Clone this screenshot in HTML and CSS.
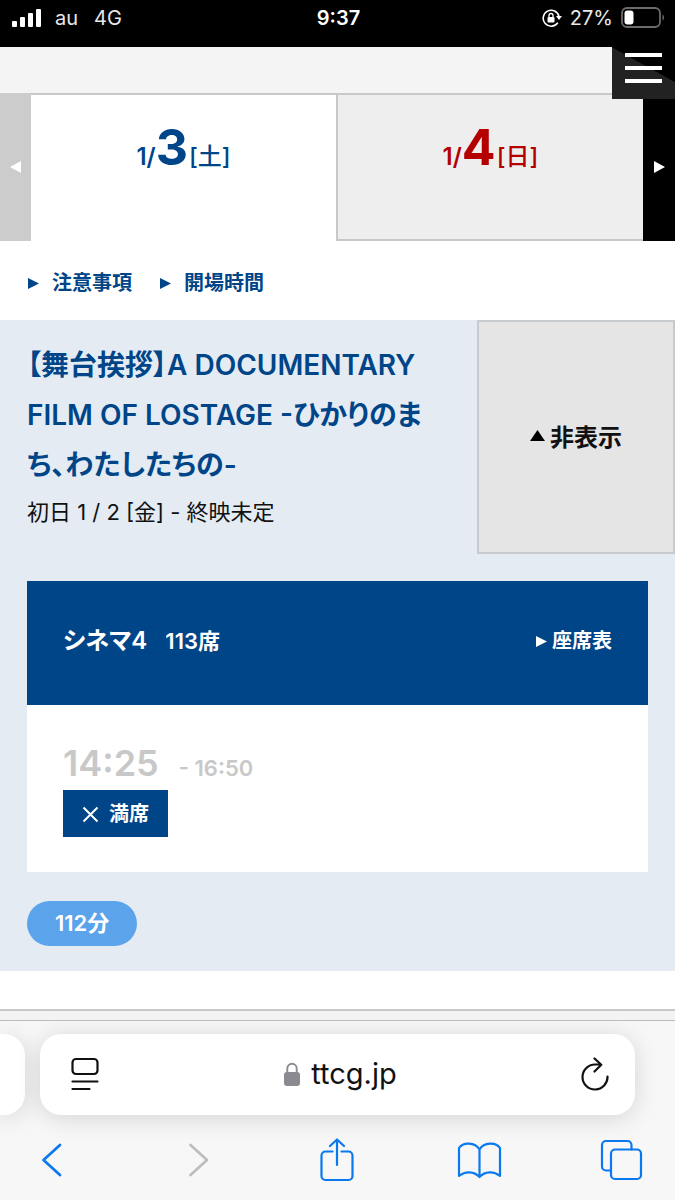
FILE: index.html
```html
<!DOCTYPE html>
<html lang="ja">
<head>
<meta charset="utf-8">
<meta name="viewport" content="width=device-width, initial-scale=1">
<title>ttcg.jp</title>
<link rel="stylesheet" href="styles.css">
</head>
<body>
<div class="phone">
  <div class="status">
    <div class="status-left">
      <svg class="signal" width="30" height="20" viewBox="0 0 30 20" aria-hidden="true"><g fill="#fff"><rect x="0" y="13" width="5" height="6" rx="1"/><rect x="8" y="9" width="5" height="10" rx="1"/><rect x="16" y="5" width="5" height="14" rx="1"/><rect x="24" y="1" width="5" height="18" rx="1"/></g></svg>
      <span>au</span><span>4G</span>
    </div>
    <div class="status-time">9:37</div>
    <div class="status-right">
      <svg width="20" height="20" viewBox="0 0 20 20" fill="none" aria-hidden="true"><path d="M15.8 14.8A8 8 0 1 1 17 8.500" stroke="#fff" stroke-width="1.600"/><path d="M14 8h6l-3 4z" fill="#fff"/><rect x="5.500" y="9" width="7" height="5.500" rx="1" fill="#fff"/><path d="M7 9V7.500a2 2 0 0 1 4 0V9" stroke="#fff" stroke-width="1.300"/></svg>
      <span>27%</span>
      <svg width="44" height="22" viewBox="0 0 44 22" fill="none" aria-hidden="true"><rect x="1" y="1" width="38" height="19" rx="5" stroke="#6b6b6b" stroke-width="1.800"/><rect x="3.500" y="3.500" width="9" height="14" rx="3" fill="#fff"/><path d="M41.500 7.500c2 .8 2 5.200 0 6z" fill="#6b6b6b"/></svg>
    </div>
  </div>

  <main class="page">
    <header class="site-header">
      <button class="menu" aria-label="メニュー"><span></span><span></span><span></span></button>
    </header>

    <nav class="dates" aria-label="上映日">
      <button class="step prev" aria-label="前の日"><svg width="11" height="12" viewBox="0 0 11 12"><path d="M11 0v12L0 6z"/></svg></button>
      <a class="date current" href="#d3"><span>1/</span><strong>3</strong><span class="dow">[土]</span></a>
      <a class="date sunday" href="#d4"><span>1/</span><strong>4</strong><span class="dow">[日]</span></a>
      <button class="step next" aria-label="次の日"><svg width="11" height="12" viewBox="0 0 11 12"><path d="M0 0v12L11 6z"/></svg></button>
    </nav>

    <div class="notes">
      <a href="#notice"><svg width="11" height="11" viewBox="0 0 11 11"><path d="M0 0v11l11-5.500z"/></svg>注意事項</a>
      <a href="#open"><svg width="11" height="11" viewBox="0 0 11 11"><path d="M0 0v11l11-5.500z"/></svg>開場時間</a>
    </div>

    <article class="film">
      <div class="film-head">
        <div class="film-info">
          <h2>【舞台挨拶】A DOCUMENTARY FILM OF LOSTAGE -ひかりのまち、わたしたちの-</h2>
          <p>初日 1 / 2 [金] - 終映未定</p>
        </div>
        <button class="toggle"><svg width="15" height="11" viewBox="0 0 15 11"><path d="M7.500 0L15 11H0z"/></svg>非表示</button>
      </div>
      <section class="screen">
        <div class="screen-head">
          <h3>シネマ4</h3><span class="seats">113席</span>
          <a href="#seatmap"><svg width="11" height="11" viewBox="0 0 11 11"><path d="M0 0v11l11-5.500z"/></svg>座席表</a>
        </div>
        <div class="screen-body">
          <div class="time"><span class="start">14:25</span><span class="end">- 16:50</span></div>
          <div class="full"><svg width="17" height="17" viewBox="0 0 17 17"><path d="M1.500 1.500l14 14M15.500 1.500l-14 14"/></svg>満席</div>
        </div>
      </section>
      <span class="runtime">112分</span>
    </article>
    <div class="next-film"></div>
  </main>

  <footer class="browser">
    <div class="address-row">
      <div class="other-tab"></div>
      <div class="address">
        <button aria-label="ページメニュー"><svg width="30" height="34" viewBox="0 0 30 34" fill="none" stroke="#111" stroke-width="2.200" stroke-linecap="round"><rect x="2.500" y="2" width="25" height="15" rx="3.500"/><path d="M2.500 24.500h25M2.500 32h17"/></svg></button>
        <a class="host" href="#top"><svg width="18" height="25" viewBox="0 0 18 25"><rect x="1" y="10" width="16" height="14" rx="3" fill="#8a8a90"/><path d="M4.300 11V6.500a4.700 4.700 0 0 1 9.400 0V11" fill="none" stroke="#8a8a90" stroke-width="1.900"/></svg>ttcg.jp</a>
        <button aria-label="再読み込み"><svg width="30" height="34" viewBox="0 0 30 34" fill="none" stroke="#111" stroke-width="2.200" stroke-linecap="round" stroke-linejoin="round"><path d="M27.500 19.500A12.500 12.500 0 1 1 15 7.500h6M14.500 1.500l6.800 6.200-6.800 6.800"/></svg></button>
      </div>
    </div>
    <div class="tools">
      <button aria-label="戻る"><svg width="48" height="44" viewBox="0 0 48 44"><path d="M32 7L15.500 22 32 37" stroke-width="2.700"/></svg></button>
      <button class="off" aria-label="進む"><svg width="48" height="44" viewBox="0 0 48 44"><path d="M20.500 7L37 22 20.500 37" stroke-width="2.700"/></svg></button>
      <button aria-label="共有"><svg width="48" height="44" viewBox="0 0 48 44"><path d="M19.500 13.500H12.500a4 4 0 0 0-4 4V38a4 4 0 0 0 4 4h23a4 4 0 0 0 4-4V17.500a4 4 0 0 0-4-4h-7M24 27V2M17 8l7-6.500L31 8"/></svg></button>
      <button aria-label="ブックマーク"><svg width="48" height="44" viewBox="0 0 48 44"><path d="M24.500 11.500C20 4 8 4 4 10v28c6-5 15-5 20.500 1V11.500C29 4 41 4 45 10v28c-6-5-15-5-20.500 1"/></svg></button>
      <button aria-label="タブ"><svg width="48" height="44" viewBox="0 0 48 44"><path d="M13 32.500H9a4 4 0 0 1-4-4V7a4 4 0 0 1 4-4h21.500a4 4 0 0 1 4 4v4.500"/><rect x="14" y="11.500" width="30" height="29.500" rx="4"/></svg></button>
    </div>
  </footer>
</div>
</body>
</html>
```
FILE: styles.css
```css
* { box-sizing: border-box; }

body {
  margin: 0;
  background: #fff;
  color: #111;
  font-family: Inter, "Noto Sans CJK JP", sans-serif;
  font-size: 20px;
}

h2, h3, p { margin: 0; }
a { color: inherit; text-decoration: none; }
button {
  margin: 0;
  padding: 0;
  border: 0;
  background: none;
  color: inherit;
  font: inherit;
}
svg { display: block; flex: none; }

.phone {
  display: flex;
  flex-direction: column;
  min-height: 100vh;
}

/* Status bar */
.status {
  display: grid;
  grid-template-columns: 1fr auto 1fr;
  align-items: center;
  padding: 3px 10px 14px 12px;
  background: #000;
  color: #fff;
  line-height: 30px;
}
.status-left { display: flex; align-items: center; gap: 16px; }
.signal { margin-right: -3px; }
.status-left, .status-right { color: #e8e8e8; }
.status-time { font-weight: 600; }
.status-right {
  display: flex;
  align-items: center;
  justify-content: flex-end;
  gap: 8px;
}

/* Page header and date tabs */
.site-header {
  position: relative;
  height: 46px;
  background: #f4f4f4;
}
.menu {
  position: absolute;
  z-index: 1;
  top: 0;
  right: 0;
  display: flex;
  flex-direction: column;
  align-items: center;
  gap: 9px;
  width: 63px;
  height: 52px;
  padding-top: 6px;
  background: linear-gradient(209deg, #000 40%, #222 41%);
}
.menu span { width: 37px; height: 4px; background: #fff; }

.dates { display: flex; height: 148px; }
.step {
  display: flex;
  align-items: center;
  justify-content: center;
  width: 31px;
  fill: #fff;
}
.prev { background: #ccc; }
.next { width: 32px; background: #000; }
.date {
  flex: 1;
  display: flex;
  align-items: baseline;
  justify-content: center;
  padding-top: 22px;
  border-top: 2px solid #c8c8c8;
  font-size: 24px;
  font-weight: 600;
  line-height: 60px;
}
.date strong { font-size: 50px; font-weight: 700; }
.dow { margin-left: 1px; font-weight: 500; }
.current { color: #004588; }
.sunday {
  border-bottom: 2px solid #c8c8c8;
  border-left: 2px solid #c8c8c8;
  background: #eee;
  color: #b40000;
}

.notes {
  display: flex;
  gap: 28px;
  padding: 27px 28px 22px;
  color: #004588;
  font-weight: 600;
  line-height: 30px;
}
.notes a { display: flex; align-items: center; gap: 13px; }
.notes svg { fill: #004588; }

/* Film */
.film {
  display: flex;
  flex-direction: column;
  align-items: flex-start;
  padding-bottom: 25px;
  background: #e4ebf3;
}
.film-head { display: flex; width: 100%; }
.film-info { flex: 1; padding: 20px 27px 19px; }
.film-info h2 {
  color: #004588;
  font-size: 28px;
  font-weight: 600;
  line-height: 50px;
  font-feature-settings: "palt";
}
.film-info p { font-size: 22px; line-height: 45px; }
.toggle {
  display: flex;
  align-items: center;
  justify-content: center;
  gap: 5px;
  width: 198px;
  padding-bottom: 3px;
  border: 2px solid #c8cbce;
  background: #e5e5e5;
  font-size: 24px;
  font-weight: 600;
}

.screen {
  align-self: stretch;
  margin: 27px 27px 29px;
  background: #fff;
}
.screen-head {
  display: flex;
  align-items: center;
  padding: 40px 36px 44px;
  background: #004588;
  color: #fff;
  font-weight: 600;
  line-height: 40px;
}
.screen-head h3 {
  font-size: 24px;
  font-weight: 600;
  font-feature-settings: "palt";
}
.seats { margin-left: 18px; font-size: 22px; }
.screen-head a {
  display: flex;
  align-items: center;
  gap: 5px;
  margin-left: auto;
}
.screen-head svg { fill: #fff; }
.screen-body { padding: 33px 36px 35px; }
.time {
  display: flex;
  align-items: baseline;
  gap: 20px;
  height: 52px;
  color: #c8c8c8;
  font-weight: 600;
  line-height: 50px;
}
.start { font-size: 36px; }
.end { font-size: 22px; }
.full {
  display: flex;
  align-items: center;
  gap: 10px;
  width: max-content;
  padding: 2px 19px 0;
  background: #004588;
  color: #fff;
  font-weight: 600;
  line-height: 45px;
}
.full svg { fill: none; stroke: #fff; stroke-width: 2px; }
.runtime {
  margin-left: 27px;
  padding: 0 28px;
  border-radius: 23px;
  background: #5ba4ec;
  color: #fff;
  font-size: 22px;
  font-weight: 600;
  line-height: 45px;
}
.next-film {
  height: 49px;
  border-bottom: 9px solid #f3f3f3;
  background: linear-gradient(#fff 38px, #c8c8c8 38px);
}

/* Browser toolbar */
.browser {
  flex: 1;
  border-top: 1px solid #bbb;
  background: #f7f7f7;
  overflow: hidden;
}
.address-row {
  display: flex;
  gap: 15px;
  padding: 13px 40px 0 0;
}
.other-tab, .address {
  border-radius: 0 21px 21px 0;
  background: #fff;
  box-shadow: 0 3px 24px rgb(0 0 0 / 14%);
}
.other-tab { width: 25px; }
.address {
  flex: 1;
  display: flex;
  align-items: center;
  justify-content: space-between;
  padding: 20px 25px 21px 30px;
  border-radius: 21px;
}
.host {
  display: flex;
  align-items: center;
  gap: 10px;
  font-size: 29px;
  line-height: 40px;
}
.tools {
  display: flex;
  justify-content: space-between;
  padding: 23px 30px 16px 28px;
}
.tools svg {
  fill: none;
  stroke: #0a78ee;
  stroke-width: 2.200px;
  stroke-linecap: round;
  stroke-linejoin: round;
}
.tools .off svg { stroke: #bdbdbd; }
```
